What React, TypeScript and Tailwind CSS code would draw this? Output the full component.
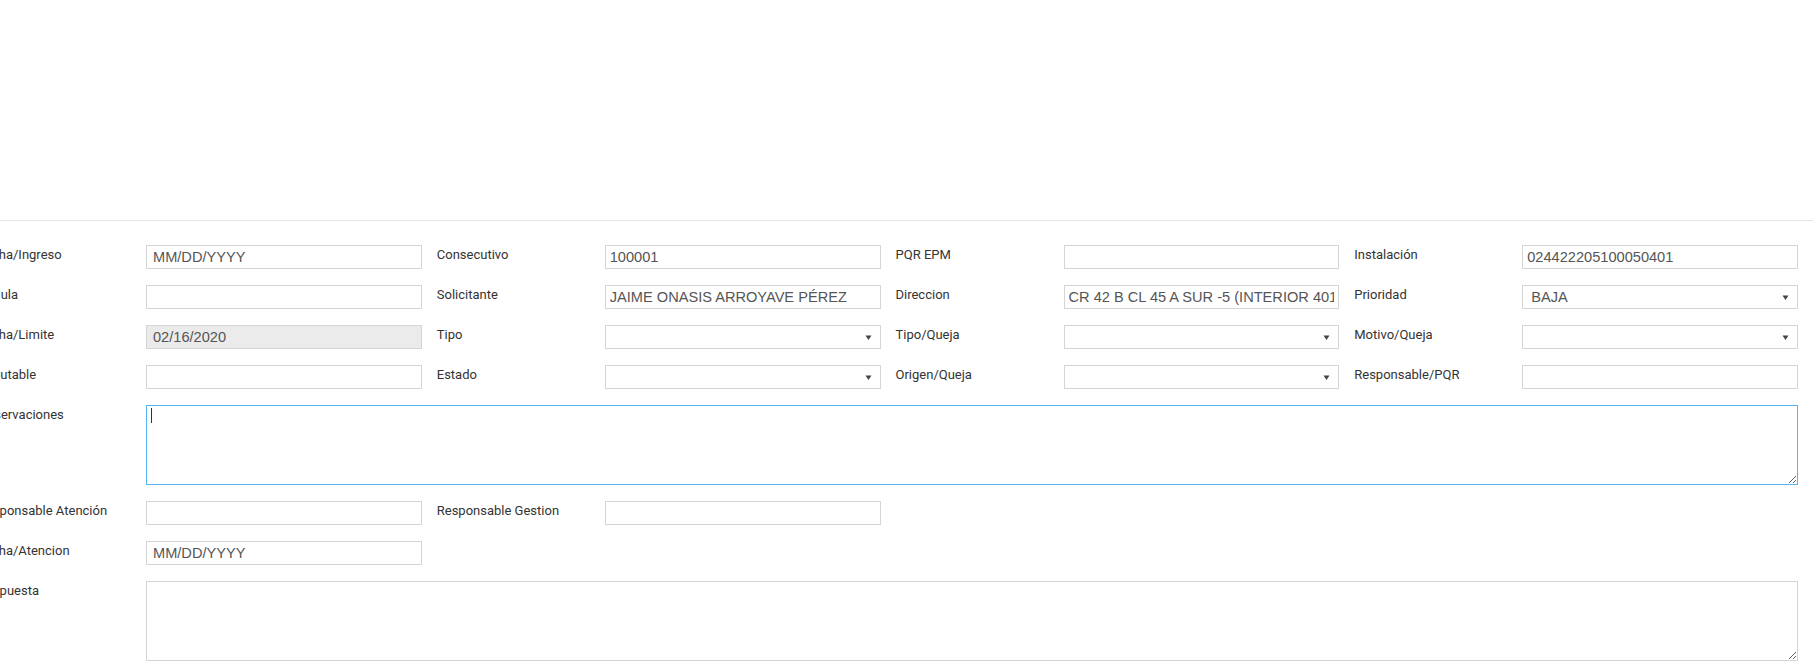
import React from "react";

const Label = ({ children }: { children: React.ReactNode }) => (
  <div className="w-[168px] shrink-0 whitespace-nowrap font-['Roboto'] text-[13px] leading-[20px] text-[#333]">
    {children}
  </div>
);

const TextInput = ({ value = "", disabled = false, date = false }: { value?: string; disabled?: boolean; date?: boolean }) => (
  <input
    readOnly
    value={value}
    className={
      "h-[24px] min-w-0 flex-1 border border-[#d5d5d5] font-['Liberation_Sans'] text-[14.6px] text-[#555] outline-none " +
      (disabled ? "bg-[#ebebeb] " : "bg-white ") +
      (date ? "pl-[6px] pr-[4px]" : "px-[4px]")
    }
  />
);

const Select = ({ value = "" }: { value?: string }) => (
  <div className="flex h-[24px] min-w-0 flex-1 items-center justify-between border border-[#d5d5d5] bg-white pl-[8px] pr-[8px] font-['Liberation_Sans'] text-[14.6px] text-[#555]">
    <span className="pt-[1px]">{value}</span>
    <svg width="7" height="7" viewBox="0 0 7 7">
      <polygon points="0.5,1.5 6.5,1.5 3.5,6" fill="#444" />
    </svg>
  </div>
);

const Field = ({ label, children }: { label?: string; children?: React.ReactNode }) => (
  <div className="flex pl-[15px]">
    {label !== undefined && <Label>{label}</Label>}
    {children}
  </div>
);

const Area = ({ label, focused = false }: { label: string; focused?: boolean }) => (
  <div className="mb-[16px] flex pl-[15px]">
    <Label>{label}</Label>
    <div className="relative flex-1">
      <textarea
        readOnly
        className={
          "block h-[80px] w-full border bg-white outline-none " +
          (focused ? "border-[#55b4f0]" : "border-[#d5d5d5]")
        }
      />
      {focused && <span className="absolute left-[5px] top-[3px] h-[15px] w-px bg-[#333]" />}
    </div>
  </div>
);

export default function App() {
  return (
    <div className="min-h-[666px] w-full overflow-hidden bg-white">
      <div className="mt-[220px] h-px w-[1813px] bg-[#e5e5e5]" />
      <div className="ml-[-37px] mt-[24px] w-[1835px]">
        <div className="mb-[16px] grid grid-cols-4">
          <Field label="Fecha/Ingreso"><TextInput value="MM/DD/YYYY" date /></Field>
          <Field label="Consecutivo"><TextInput value="100001" /></Field>
          <Field label="PQR EPM"><TextInput /></Field>
          <Field label="Instalación"><TextInput value="024422205100050401" /></Field>
        </div>
        <div className="mb-[16px] grid grid-cols-4">
          <Field label="Cedula"><TextInput /></Field>
          <Field label="Solicitante"><TextInput value="JAIME ONASIS ARROYAVE PÉREZ" /></Field>
          <Field label="Direccion"><TextInput value="CR 42 B CL 45 A SUR -5 (INTERIOR 401)" /></Field>
          <Field label="Prioridad"><Select value="BAJA" /></Field>
        </div>
        <div className="mb-[16px] grid grid-cols-4">
          <Field label="Fecha/Limite"><TextInput value="02/16/2020" disabled date /></Field>
          <Field label="Tipo"><Select /></Field>
          <Field label="Tipo/Queja"><Select /></Field>
          <Field label="Motivo/Queja"><Select /></Field>
        </div>
        <div className="mb-[16px] grid grid-cols-4">
          <Field label="Imputable"><TextInput /></Field>
          <Field label="Estado"><Select /></Field>
          <Field label="Origen/Queja"><Select /></Field>
          <Field label="Responsable/PQR"><TextInput /></Field>
        </div>
        <Area label="Observaciones" focused />
        <div className="mb-[16px] grid grid-cols-4">
          <Field label="Responsable Atención"><TextInput /></Field>
          <Field label="Responsable Gestion"><TextInput /></Field>
        </div>
        <div className="mb-[16px] grid grid-cols-4">
          <Field label="Fecha/Atencion"><TextInput value="MM/DD/YYYY" date /></Field>
        </div>
        <Area label="Respuesta" />
      </div>
    </div>
  );
}
